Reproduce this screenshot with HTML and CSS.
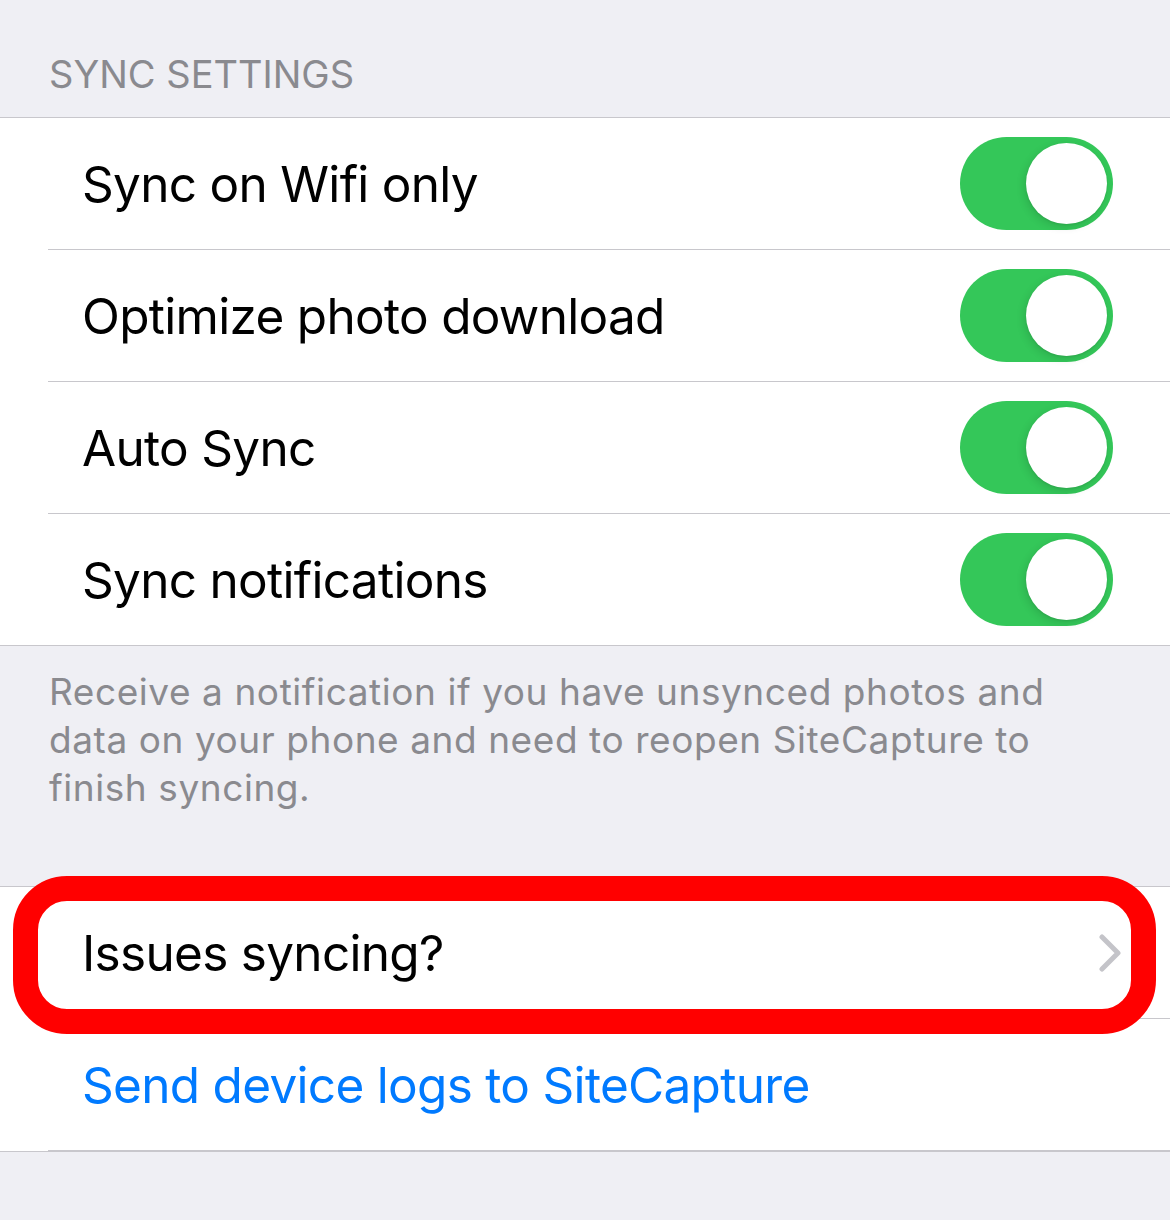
FILE: index.html
```html
<!DOCTYPE html>
<html>
<head>
<meta charset="utf-8">
<link rel="stylesheet" href="styles.css">
</head>
<body>
<div class="header">SYNC SETTINGS</div>
<div class="group">
  <div class="row"><span class="label">Sync on Wifi only</span><span class="toggle"><span class="knob"></span></span></div>
  <div class="row"><span class="label">Optimize photo download</span><span class="toggle"><span class="knob"></span></span></div>
  <div class="row"><span class="label">Auto Sync</span><span class="toggle"><span class="knob"></span></span></div>
  <div class="row"><span class="label">Sync notifications</span><span class="toggle"><span class="knob"></span></span></div>
</div>
<div class="footer">Receive a notification if you have unsynced photos and data on your phone and need to reopen SiteCapture to finish syncing.</div>
<div class="group group2">
  <div class="row"><span class="label">Issues syncing?</span>
    <svg class="chevron" width="24" height="40" viewBox="0 0 24 40"><polyline points="3,4 19,20 3,36" fill="none" stroke="#c4c4c9" stroke-width="5" stroke-linecap="round" stroke-linejoin="round"/></svg>
  </div>
  <div class="row"><span class="label link">Send device logs to SiteCapture</span></div>
  <div class="highlight"></div>
</div>
</body>
</html>
```
FILE: styles.css
```css
html, body {
  margin: 0;
  padding: 0;
  background: #efeff4;
  font-family: Inter, "Noto Sans", sans-serif;
  -webkit-font-smoothing: antialiased;
}
.header {
  height: 117px;
  box-sizing: border-box;
  padding: 51px 0 0 49px;
  font-size: 38px;
  line-height: 46px;
  color: #8a8a8f;
  letter-spacing: 0;
}
.group {
  background: #fff;
  border-top: 1px solid #c8c7cc;
  border-bottom: 1px solid #c8c7cc;
  position: relative;
}
.row {
  height: 131px;
  margin-left: 48px;
  padding: 0 57px 0 34px;
  display: flex;
  align-items: center;
  justify-content: space-between;
  border-bottom: 1px solid #c8c7cc;
}
.row:last-of-type {
  border-bottom: none;
}
.label {
  font-size: 49.5px;
  color: #000;
  letter-spacing: -0.7px;
}
.link {
  color: #007aff;
}
.toggle {
  width: 153px;
  height: 93px;
  border-radius: 47px;
  background: #34c759;
  display: flex;
  justify-content: flex-end;
  align-items: center;
  padding: 0 6px;
  box-sizing: border-box;
}
.knob {
  width: 81px;
  height: 81px;
  border-radius: 50%;
  background: #fff;
  box-shadow: -2px 3px 8px rgba(0, 0, 0, 0.12), 0 1px 2px rgba(0, 0, 0, 0.08);
}
.chevron {
  margin-right: -10px;
}
.footer {
  height: 240px;
  box-sizing: border-box;
  padding: 22px 100px 0 49px;
  font-size: 37px;
  line-height: 48px;
  color: #8a8a8f;
  letter-spacing: 0.57px;
}
.highlight {
  position: absolute;
  top: -11px;
  left: 13px;
  width: 1143px;
  height: 158px;
  box-sizing: border-box;
  border: 25px solid #ff0000;
  border-radius: 54px;
}
```
